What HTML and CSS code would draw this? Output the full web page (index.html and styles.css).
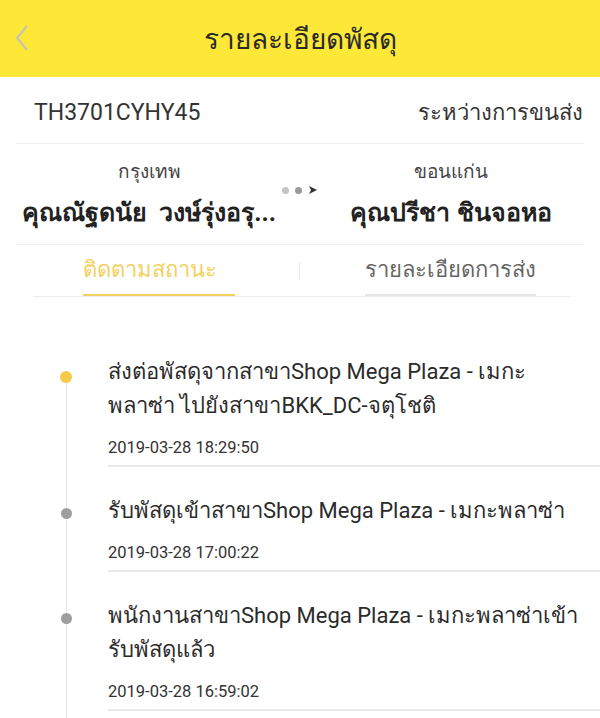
FILE: index.html
```html
<!DOCTYPE html>
<html>
  <head>
    <meta charset="UTF-8">
    <title>รายละเอียดพัสดุ</title>
    <link rel="stylesheet" href="styles.css">
  </head>
  <body>
    <div class="topbar">
      <span class="back"><svg width="16" height="28" viewBox="0 0 16 28"><path d="M13 2 L3 14 L13 26" fill="none" stroke="#c3c4b8" stroke-width="2.2"/></svg></span>
      <h1>รายละเอียดพัสดุ</h1>
    </div>

    <div class="summary">
      <div class="track">
        <span class="code">TH3701CYHY45</span>
        <span class="state">ระหว่างการขนส่ง</span>
      </div>
      <div class="route">
        <div class="party">
          <div class="city">กรุงเทพ</div>
          <div class="name">คุณณัฐดนัย &nbsp;วงษ์รุ่งอรุ...</div>
        </div>
        <div class="arrow">
          <span class="dot"></span><span class="dot dark"></span>
          <svg width="10" height="10" viewBox="0 0 10 10"><path d="M1 1 L9 5 L1 9 L3 5 Z" fill="#333"/></svg>
        </div>
        <div class="party">
          <div class="city">ขอนแก่น</div>
          <div class="name">คุณปรีชา ชินจอหอ</div>
        </div>
      </div>
    </div>

    <div class="tabs">
      <div class="tab active">ติดตามสถานะ</div>
      <div class="sep"></div>
      <div class="tab other"><span>รายละเอียดการส่ง</span></div>
    </div>

    <ul class="timeline">
      <li class="current">
        <p>ส่งต่อพัสดุจากสาขาShop Mega Plaza - เมกะพลาซ่า ไปยังสาขาBKK_DC-จตุโชติ</p>
        <time>2019-03-28 18:29:50</time>
      </li>
      <li>
        <p>รับพัสดุเข้าสาขาShop Mega Plaza - เมกะพลาซ่า</p>
        <time>2019-03-28 17:00:22</time>
      </li>
      <li>
        <p>พนักงานสาขาShop Mega Plaza - เมกะพลาซ่าเข้ารับพัสดุแล้ว</p>
        <time>2019-03-28 16:59:02</time>
      </li>
    </ul>
  </body>
</html>
```

FILE: styles.css
```css
html { margin: 0; padding: 0; background-color: white; }
body { margin: 0; font-family: Roboto, "Noto Sans", sans-serif; color: #222; overflow: hidden; }

.topbar { height: 77px; background-color: #fde737; display: flex; align-items: center; justify-content: center; position: relative; }
.topbar h1 { margin: 0; font-size: 28px; font-weight: normal; color: #2a2a2a; }
.topbar .back { position: absolute; left: 14px; top: 24px; }

.summary { padding: 0 16px; }
.track { display: flex; justify-content: space-between; align-items: center; height: 67px; border-bottom: 1px solid #f0f0f0; padding: 4px 1px 0 18px; box-sizing: border-box; color: #333; }
.track .code { font-size: 23px; }
.track .state { font-size: 22px; }

.route { display: flex; align-items: center; height: 100px; border-bottom: 1px solid #f0f0f0; }
.party { flex: 1; text-align: center; }
.city { font-size: 19px; color: #444; margin-bottom: 6px; }
.name { font-size: 25px; font-weight: bold; color: #222; white-space: nowrap; }
.arrow { display: flex; align-items: center; gap: 6px; margin-top: -8px; }
.arrow .dot { width: 7px; height: 7px; border-radius: 50%; background-color: #c4c4c4; }
.arrow .dot.dark { background-color: #9a9a9a; }

.tabs { display: flex; align-items: center; margin: 0 30px 0 33px; border-bottom: 1px solid #ececec; height: 51px; }
.tab { flex: 1; text-align: center; font-size: 22px; color: #666; height: 51px; line-height: 50px; box-sizing: border-box; }
.tab.active { color: #f4d060; flex: 0 0 152px; margin-left: 50px; border-bottom: 2px solid #f4d060; text-align: left; }
.tab.other { padding-left: 30px; }
.tab.other span { display: inline-block; height: 51px; box-sizing: border-box; border-bottom: 2px solid #e6e6e6; }
.sep { width: 1px; height: 18px; background-color: #eaeaea; margin-left: 64px; }

.timeline { list-style: none; margin: 0; padding: 50px 0 0 108px; position: relative; }
.timeline::before { content: ""; position: absolute; left: 66px; top: 82px; bottom: -200px; width: 1px; background-color: #e6e6e6; }
.timeline li { position: relative; border-bottom: 2px solid #e8e8e8; padding: 8px 0 7px 0; margin-bottom: 19px; }
.timeline li::before { content: ""; position: absolute; left: -47px; top: 22px; width: 11px; height: 11px; border-radius: 50%; background-color: #9e9e9e; }
.timeline li.current::before { background-color: #f7c948; width: 12px; height: 12px; left: -48px; top: 24px; }
.timeline p { margin: 0; font-size: 22px; line-height: 34px; color: #2b2b2b; padding-right: 19px; }
.timeline time { display: block; font-size: 16.5px; line-height: 20px; color: #333; margin-top: 15px; }
```
